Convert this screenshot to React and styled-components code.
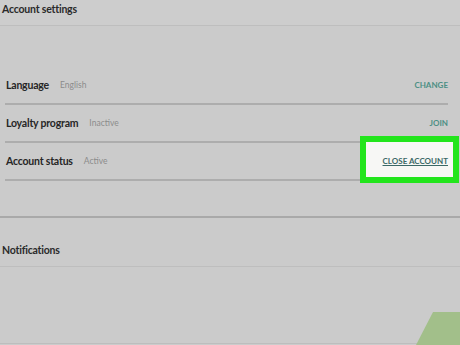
import React from 'react';
import styled, { createGlobalStyle } from 'styled-components';

const GlobalStyle = createGlobalStyle`
  html, body {
    margin: 0;
    padding: 0;
    background: #cbcbcb;
  }
  body {
    font-family: Lato, 'Liberation Sans', sans-serif;
  }
`;

const Page = styled.div`
  position: relative;
  width: 460px;
  height: 345px;
  overflow: hidden;
  background: #cbcbcb;
`;

const SectionHeader = styled.div`
  height: ${props => props.height}px;
  padding: ${props => props.pad};
  box-sizing: border-box;
  font-size: 10.5px;
  font-weight: 700;
  letter-spacing: -0.2px;
  line-height: 14px;
  color: #2a2a2a;
  border-bottom: 1px solid #bebebe;
  background: ${props => props.bg || 'transparent'};
`;

const SectionBody = styled.div`
  padding: ${props => props.pad};
  border-bottom: ${props => (props.strong ? '2px solid #a9a9a9' : '1px solid #bebebe')};
`;

const Row = styled.div`
  height: 38px;
  margin: 0 12px 0 5px;
  display: flex;
  align-items: center;
  box-sizing: border-box;
  border-bottom: 2px solid #adadad;
  padding-left: 1px;
`;

const Label = styled.span`
  font-size: 10.5px;
  font-weight: 700;
  letter-spacing: -0.2px;
  color: #262626;
`;

const Value = styled.span`
  font-size: 8.5px;
  color: #8c8c8c;
  margin-left: 11px;
`;

const Action = styled.a`
  margin-left: auto;
  font-size: 8px;
  font-weight: 700;
  color: ${props => (props.dark ? '#3b6866' : '#4b8f84')};
  text-decoration: ${props => (props.underline ? 'underline' : 'none')};
  position: relative;
  z-index: 2;
`;

const Highlight = styled.div`
  position: absolute;
  left: 360px;
  top: 136px;
  width: 99px;
  height: 47px;
  box-sizing: border-box;
  border: 6px solid #22e51c;
  background: #f7f7f5;
  z-index: 1;
`;

const Blank = styled.div`
  height: ${props => props.height}px;
  border-bottom: 1px solid #bdbdbd;
`;

const Corner = styled.svg`
  position: absolute;
  right: 0;
  bottom: 0;
`;

export default function App() {
  return (
    <Page>
      <GlobalStyle />
      <SectionHeader height={26} pad="2px 0 0 2px" bg="#cdcdcd">Account settings</SectionHeader>
      <SectionBody pad="41px 0 35px" strong>
        <Row>
          <Label>Language</Label>
          <Value>English</Value>
          <Action>CHANGE</Action>
        </Row>
        <Row>
          <Label>Loyalty program</Label>
          <Value>Inactive</Value>
          <Action>JOIN</Action>
        </Row>
        <Row>
          <Label>Account status</Label>
          <Value>Active</Value>
          <Action dark underline>CLOSE ACCOUNT</Action>
        </Row>
      </SectionBody>
      <SectionHeader height={49} pad="25px 0 0 2px">Notifications</SectionHeader>
      <Blank height={76} />
      <Highlight />
      <Corner width="44" height="34" viewBox="0 0 44 34">
        <polygon points="17,1 44,1 44,34 0,34" fill="#a2bf8a" />
      </Corner>
    </Page>
  );
}
